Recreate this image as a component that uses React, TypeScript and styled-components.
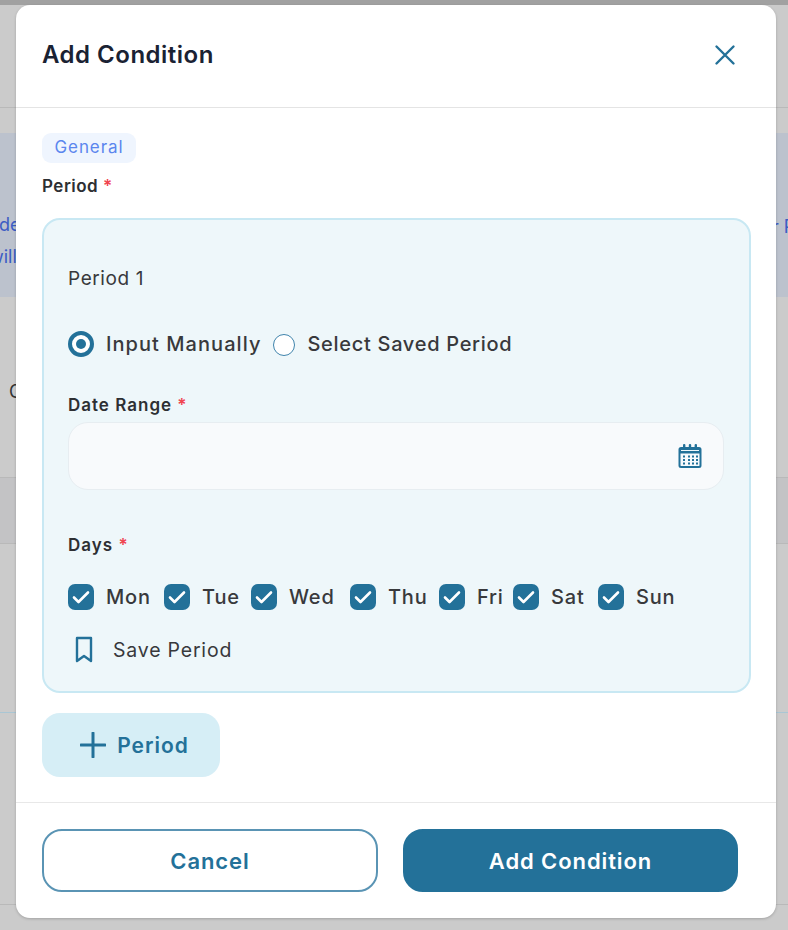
import styled, { createGlobalStyle } from "styled-components";

const Global = createGlobalStyle`
  html, body { margin: 0; padding: 0; }
  body { font-family: "Inter", "Liberation Sans", sans-serif; }
  * { box-sizing: border-box; }
`;

const Page = styled.div`
  position: relative;
  width: 788px;
  height: 930px;
  overflow: hidden;
  background: #cbcbcb;
`;

const TopBar = styled.div`
  height: 5px;
  background: #a1a1a1;
`;

const Backdrop = styled.div`
  display: flex;
  flex-direction: column;
  height: 925px;
  color: #3b5cc4;
  font-size: 18px;
`;

const BackHeader = styled.div`
  height: 103px;
  border-bottom: 1px solid #b9b9b9;
`;

const BackSpacer = styled.div<{ $h: number }>`
  height: ${({ $h }) => $h}px;
`;

const Notice = styled.div`
  height: 164px;
  background: #bcc2cd;
  display: flex;
  justify-content: space-between;
  padding-top: 76px;
  line-height: 32px;
`;

const NoticeLine = styled.div<{ $x: number }>`
  margin-left: ${({ $x }) => $x}px;
`;

const NoticeEnd = styled.div`
  width: 12px;
  margin-top: 2px;
  text-indent: -4px;
  white-space: nowrap;
`;

const BackText = styled.div`
  height: 181px;
  padding: 84px 0 0 9px;
  color: #333;
  border-bottom: 1px solid #b9b9b9;
`;

const BackRow = styled.div`
  height: 66px;
  background: #c3c3c5;
  border-bottom: 1px solid #b9b9b9;
`;

const BackBlue = styled.div`
  height: 169px;
  border-bottom: 1px solid #a9c6d4;
`;

const BackBottom = styled.div`
  height: 192px;
  border-bottom: 1px solid #b9b9b9;
`;

const Modal = styled.div`
  position: absolute;
  top: 5px;
  left: 16px;
  width: 760px;
  height: 913px;
  background: #fff;
  border-radius: 14px;
  box-shadow: 0 1px 3px rgba(0, 0, 0, 0.2);
  display: flex;
  flex-direction: column;
`;

const Header = styled.div`
  height: 103px;
  padding: 0 26px 3px;
  border-bottom: 1px solid #e4e4e4;
  display: flex;
  align-items: center;
  justify-content: space-between;
`;

const Title = styled.h2`
  margin: 0;
  font-size: 24px;
  font-weight: 600;
  letter-spacing: 0.5px;
  color: #1a2233;
`;

const CloseButton = styled.button`
  border: none;
  background: none;
  padding: 0;
  width: 28px;
  height: 28px;
  margin-right: 11px;
  color: #237199;
  display: flex;
  align-items: center;
  justify-content: center;
`;

const Body = styled.div`
  flex: 1;
  padding: 25px 25px 0 26px;
  display: flex;
  flex-direction: column;
`;

const Chip = styled.span`
  width: 94px;
  height: 30px;
  padding-bottom: 2px;
  border-radius: 9px;
  background: #eff5fe;
  color: #5b86ee;
  font-size: 17px;
  letter-spacing: 0.9px;
  display: flex;
  align-items: center;
  justify-content: center;
`;

const Label = styled.label`
  display: block;
  font-size: 17px;
  font-weight: 600;
  letter-spacing: 1px;
  color: #2d2f33;
  line-height: 20px;
`;

const Required = styled.span`
  color: #f0444f;
`;

const PeriodLabel = styled(Label)`
  margin: 13px 0 22px;
  letter-spacing: 0.5px;
`;

const PeriodCard = styled.div`
  height: 475px;
  border: 2px solid #c8e8f3;
  border-radius: 18px;
  background: #eef7fa;
  padding: 0 25px 0 24px;
  display: flex;
  flex-direction: column;
`;

const CardTitle = styled.div`
  margin-top: 46px;
  font-size: 19px;
  letter-spacing: 0.6px;
  line-height: 26px;
  color: #38393c;
`;

const RadioRow = styled.div`
  margin-top: 37px;
  height: 30px;
  display: flex;
  align-items: center;
`;

const RadioOn = styled.span`
  width: 26px;
  height: 26px;
  margin-right: 12px;
  border-radius: 50%;
  background: #fff;
  border: 4px solid #237199;
  flex: none;
  display: flex;
  align-items: center;
  justify-content: center;

  &::after {
    content: "";
    width: 10px;
    height: 10px;
    border-radius: 50%;
    background: #237199;
  }
`;

const RadioOff = styled.span`
  width: 22px;
  height: 22px;
  margin: 2px 12px 0;
  border-radius: 50%;
  background: #fff;
  border: 1.5px solid #3f84ac;
  flex: none;
`;

const RadioText = styled.span<{ $spacing: number }>`
  font-size: 20px;
  font-weight: 450;
  letter-spacing: ${({ $spacing }) => $spacing}px;
  color: #38393c;
`;

const DateLabel = styled(Label)`
  margin-top: 36px;
`;

const DateInput = styled.div`
  margin-top: 7px;
  height: 68px;
  border: 1px solid #e7edf1;
  border-radius: 20px;
  background: #f8fafc;
  display: flex;
  align-items: center;
  justify-content: flex-end;
  padding-right: 21px;
  color: #237199;
`;

const DaysLabel = styled(Label)`
  margin-top: 45px;
`;

const DaysRow = styled.div`
  margin-top: 29px;
  display: flex;
  align-items: center;
`;

const Day = styled.div<{ $w: number }>`
  width: ${({ $w }) => $w}px;
  display: flex;
  align-items: center;
  gap: 12px;
  font-size: 20px;
  font-weight: 450;
  letter-spacing: 0.8px;
  color: #38393c;
`;

const Check = styled.span`
  width: 26px;
  height: 26px;
  border-radius: 7px;
  background: #237199;
  color: #fff;
  display: flex;
  align-items: center;
  justify-content: center;
  flex: none;
`;

const SaveRow = styled.div`
  margin-top: 26px;
  display: flex;
  align-items: center;
  gap: 20px;
  padding-left: 7px;
  font-size: 19.5px;
  letter-spacing: 0.8px;
  color: #38393c;
`;

const AddPeriod = styled.button`
  margin-top: 20px;
  width: 178px;
  height: 64px;
  border: none;
  border-radius: 18px;
  background: #d6eef6;
  color: #237199;
  padding: 0 0 0 7px;
  font-family: inherit;
  font-size: 21px;
  font-weight: 600;
  letter-spacing: 1px;
  display: flex;
  align-items: center;
  justify-content: center;
  gap: 11px;
`;

const Footer = styled.div`
  height: 116px;
  border-top: 1px solid #e8e8e8;
  padding: 26px 38px 0 26px;
  display: grid;
  grid-template-columns: 336px 335px;
  column-gap: 25px;
  align-items: start;
`;

const FooterButton = styled.button<{ $primary?: boolean }>`
  height: 63px;
  border-radius: 20px;
  border: 2px solid ${({ $primary }) => ($primary ? "#237199" : "#5a94b4")};
  background: ${({ $primary }) => ($primary ? "#237199" : "#fff")};
  color: ${({ $primary }) => ($primary ? "#fff" : "#237199")};
  font-family: inherit;
  font-size: 22px;
  font-weight: 600;
  letter-spacing: 0.9px;
`;

const days = [
  { name: "Mon", w: 96 },
  { name: "Tue", w: 87 },
  { name: "Wed", w: 99 },
  { name: "Thu", w: 89 },
  { name: "Fri", w: 74 },
  { name: "Sat", w: 85 },
  { name: "Sun", w: 84 },
];

const CheckIcon = () => (
  <svg width="20" height="20" viewBox="0 0 20 20" fill="none" stroke="currentColor" strokeWidth="2.6" strokeLinecap="round" strokeLinejoin="round">
    <path d="M3 10.5l4.5 4.5L17 5.5" />
  </svg>
);

const CalendarIcon = () => (
  <svg width="24" height="24" viewBox="0 0 24 24" fill="currentColor">
    <path d="M3 3h18a2.5 2.5 0 0 1 2.5 2.5v16a2.5 2.5 0 0 1-2.5 2.5H3A2.5 2.5 0 0 1 .5 21.500v-16A2.500 2.500 0 0 1 3 3zm-.5 6.500v12c0 .3.2.5.5.5h18c.3 0 .5-.2.5-.5v-12z" />
    <rect x="5" y="0" width="2.4" height="5" rx="1" />
    <rect x="10.800" y="0" width="2.4" height="5" rx="1" />
    <rect x="16.600" y="0" width="2.4" height="5" rx="1" />
    <rect x="3" y="6" width="18" height="1" fill="#eef7fa" />
    {[5, 10, 14, 18].map((x) =>
      [11.5, 15, 18.5].map((y) => <rect key={`${x}-${y}`} x={x} y={y} width="2" height="2" />),
    )}
  </svg>
);

const BookmarkIcon = () => (
  <svg width="18" height="28" viewBox="0 0 18 28" fill="none" stroke="#237199" strokeWidth="2.4" strokeLinejoin="round">
    <path d="M2 2h14v23l-7-5-7 5z" />
  </svg>
);

const App = () => (
  <Page>
    <Global />
    <TopBar />
    <Backdrop>
      <BackHeader />
      <BackSpacer $h={25} />
      <Notice>
        <div>
          <NoticeLine $x={-1}>de</NoticeLine>
          <NoticeLine $x={-11}>will</NoticeLine>
        </div>
        <NoticeEnd>r P</NoticeEnd>
      </Notice>
      <BackText>C</BackText>
      <BackRow />
      <BackBlue />
      <BackBottom />
    </Backdrop>
    <Modal>
      <Header>
        <Title>Add Condition</Title>
        <CloseButton aria-label="Close">
          <svg width="22" height="22" viewBox="0 0 22 22" fill="none" stroke="currentColor" strokeWidth="2.4" strokeLinecap="round">
            <path d="M2.500 2.500l17 17M19.500 2.500l-17 17" />
          </svg>
        </CloseButton>
      </Header>
      <Body>
        <Chip>General</Chip>
        <PeriodLabel>
          Period <Required>*</Required>
        </PeriodLabel>
        <PeriodCard>
          <CardTitle>Period 1</CardTitle>
          <RadioRow>
            <RadioOn />
            <RadioText $spacing={1.05}>Input Manually</RadioText>
            <RadioOff />
            <RadioText $spacing={0.7}>Select Saved Period</RadioText>
          </RadioRow>
          <DateLabel>
            Date Range <Required>*</Required>
          </DateLabel>
          <DateInput>
            <CalendarIcon />
          </DateInput>
          <DaysLabel>
            Days <Required>*</Required>
          </DaysLabel>
          <DaysRow>
            {days.map((d) => (
              <Day key={d.name} $w={d.w}>
                <Check>
                  <CheckIcon />
                </Check>
                {d.name}
              </Day>
            ))}
          </DaysRow>
          <SaveRow>
            <BookmarkIcon />
            Save Period
          </SaveRow>
        </PeriodCard>
        <div>
          <AddPeriod>
            <svg width="26" height="26" viewBox="0 0 26 26" fill="none" stroke="currentColor" strokeWidth="3" strokeLinecap="round">
              <path d="M13 1v24M1 13h24" />
            </svg>
            Period
          </AddPeriod>
        </div>
      </Body>
      <Footer>
        <FooterButton>Cancel</FooterButton>
        <FooterButton $primary>Add Condition</FooterButton>
      </Footer>
    </Modal>
  </Page>
);

export default App;
